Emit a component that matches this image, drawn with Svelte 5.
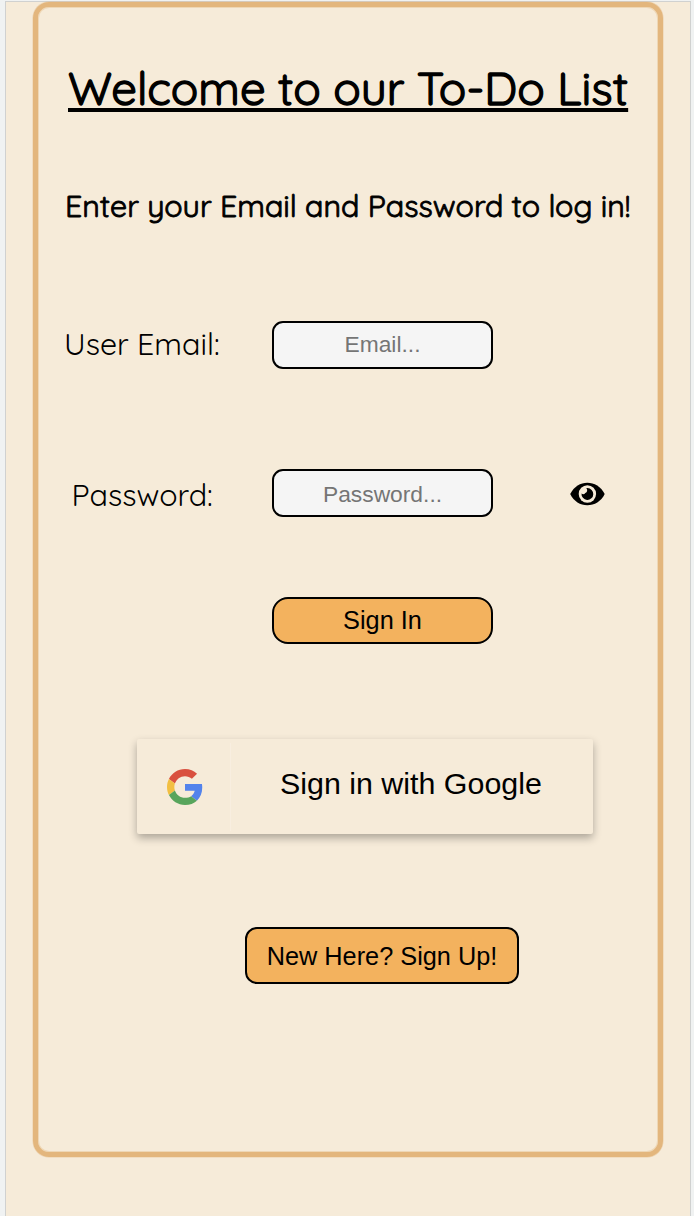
<script>
  let email = $state('');
  let password = $state('');
  let visible = $state(false);
</script>

<div class="window">
  <main class="page">
    <section class="card">
      <h1><span>Welcome to our To-Do List</span></h1>
      <h2><span>Enter your Email and Password to log in!</span></h2>

      <form onsubmit={(e) => e.preventDefault()}>
        <div class="row email">
          <label for="email"><span>User Email:</span></label>
          <input id="email" type="text" placeholder="Email..." bind:value={email} />
        </div>
        <div class="row password">
          <label for="password"><span>Password:</span></label>
          <input id="password" type={visible ? 'text' : 'password'} placeholder="Password..." bind:value={password} />
          <button type="button" class="eye" aria-label="Show password" onclick={() => (visible = !visible)}>
            <svg viewBox="0 0 36 24" width="36" height="24">
              <path fill="#000" d="M.2 12C4 4.500 10.500 .7 17.300 .7S31 4.500 34.700 12C31 19.500 24.500 23.300 17.300 23.300S4 19.500 .2 12Z" />
              <circle cx="17.400" cy="12" r="8.700" fill="#f6ebd9" />
              <path fill="#000" d="M17.400 6.100A5.900 5.900 0 1 1 11.500 11.500A2.600 2.600 0 0 0 15.300 11A2.900 2.900 0 0 0 16.300 6.200A5.900 5.900 0 0 1 17.400 6.100Z" />
            </svg>
          </button>
        </div>
        <button class="sign-in">Sign In</button>
      </form>

      <button class="google">
        <span class="logo">
          <svg viewBox="0 0 48 48" width="36" height="36">
            <path fill="#d9503f" d="M24 9.500c3.540 0 6.710 1.220 9.210 3.600l6.850-6.850C35.900 2.380 30.470 0 24 0 14.620 0 6.510 5.380 2.560 13.220l7.980 6.190C12.430 13.720 17.740 9.500 24 9.500z" />
            <path fill="#5383ec" d="M46.980 24.550c0-1.570-.15-3.090-.38-4.550H24v9.020h12.940c-.58 2.960-2.260 5.480-4.780 7.180l7.730 6c4.510-4.180 7.090-10.360 7.090-17.650z" />
            <path fill="#f2bf42" d="M10.530 28.590c-.48-1.450-.76-2.990-.76-4.590s.27-3.140.76-4.590l-7.980-6.190C.92 16.460 0 20.120 0 24c0 3.880.92 7.540 2.560 10.780l7.970-6.190z" />
            <path fill="#58a55c" d="M24 48c6.480 0 11.930-2.130 15.890-5.810l-7.730-6c-2.150 1.450-4.920 2.300-8.160 2.300-6.260 0-11.570-4.220-13.470-9.910l-7.980 6.190C6.510 42.620 14.620 48 24 48z" />
          </svg>
        </span>
        <span class="caption">Sign in with Google</span>
      </button>

      <button class="sign-up">New Here? Sign Up!</button>
    </section>
  </main>
</div>

<style>
  :global(body) {
    background: #f0f2f2;
  }
  .window {
    box-sizing: border-box;
    height: 1216px;
    padding: 1px 3px 0 5px;
    overflow: hidden;
  }
  .page {
    box-sizing: border-box;
    height: 1215px;
    border: 1px solid #d0d1d0;
    border-bottom: 0;
    background: #f6ebd9;
    padding: 0 27px;
  }
  .card {
    box-sizing: border-box;
    width: 630px;
    height: 1155px;
    border: 5px solid #e3b67d;
    border-radius: 16px;
    box-shadow: 0 0 0 0.5px #e3b67d80, inset 0 0 0 1px #e3b67d60;
    display: flex;
    flex-direction: column;
    color: #000;
    font-family: Quicksand, Lato, sans-serif;
  }
  h1, h2 {
    margin: 0;
    white-space: nowrap;
    font-weight: 400;
  }
  h1 {
    padding: 51px 0 3px 30px;
    height: 60px;
    font-size: 45.600px;
    line-height: 60px;
    -webkit-text-stroke: 1.400px #000;
    text-decoration: underline;
    text-decoration-thickness: 4px;
    text-underline-offset: 3px;
    text-decoration-skip-ink: none;
  }
  h2 {
    padding: 65px 0 0 27px;
    height: 40px;
    font-size: 30.400px;
    line-height: 40px;
    -webkit-text-stroke: 0.900px #000;
  }
  form {
    display: flex;
    flex-direction: column;
    padding: 95px 0 0 27px;
  }
  .row {
    display: flex;
    align-items: center;
    height: 48px;
  }
  .password {
    margin-top: 100px;
  }
  label {
    box-sizing: border-box;
    width: 207px;
    font-size: 30.400px;
    line-height: 40px;
    font-weight: 400;
    white-space: nowrap;
  }
  .email label {
    padding-bottom: 2px;
  }
  .email label span {
    margin-left: -1px;
  }
  .password label {
    padding-left: 6.500px;
    padding-top: 4px;
  }
  input, button {
    box-sizing: border-box;
    margin: 0;
    padding: 0;
    color: #000;
    font-family: "Liberation Sans", Arial, sans-serif;
    text-align: center;
  }
  input {
    width: 221px;
    height: 48px;
    border: 2px solid #000;
    border-radius: 11px;
    background: #f5f5f5;
    font-size: 22.800px;
    outline: none;
  }
  .password input {
    padding-top: 2px;
  }
  .email input {
    padding-bottom: 1px;
  }
  input::placeholder {
    color: #757575;
  }
  .eye {
    display: flex;
    margin-left: 77px;
    padding-top: 2px;
    border: 0;
    background: none;
  }
  .sign-in, .sign-up {
    border: 2px solid #000;
    background: #f3b25e;
    font-size: 25.300px;
  }
  .sign-in {
    width: 221px;
    height: 47px;
    margin: 80px 0 0 207px;
    border-radius: 16px;
  }
  .google {
    display: flex;
    align-items: center;
    width: 456px;
    height: 95px;
    margin: 95px 0 0 99px;
    border: 0;
    border-radius: 2px;
    background: #f6ebd9;
    box-shadow: 0 4px 8px rgba(0, 0, 0, 0.3);
    font-size: 30.400px;
  }
  .logo {
    box-sizing: border-box;
    display: flex;
    align-items: center;
    width: 94px;
    height: 88px;
    padding-left: 30px;
    background: linear-gradient(#f8eee0, #f8eee0) 93px 0 / 1px 100% no-repeat;
  }
  .caption {
    padding: 0 0 6px 49px;
  }
  .sign-up {
    width: 274px;
    height: 57px;
    margin: 93px 0 0 207px;
    padding-top: 2px;
    border-radius: 12px;
  }
</style>
